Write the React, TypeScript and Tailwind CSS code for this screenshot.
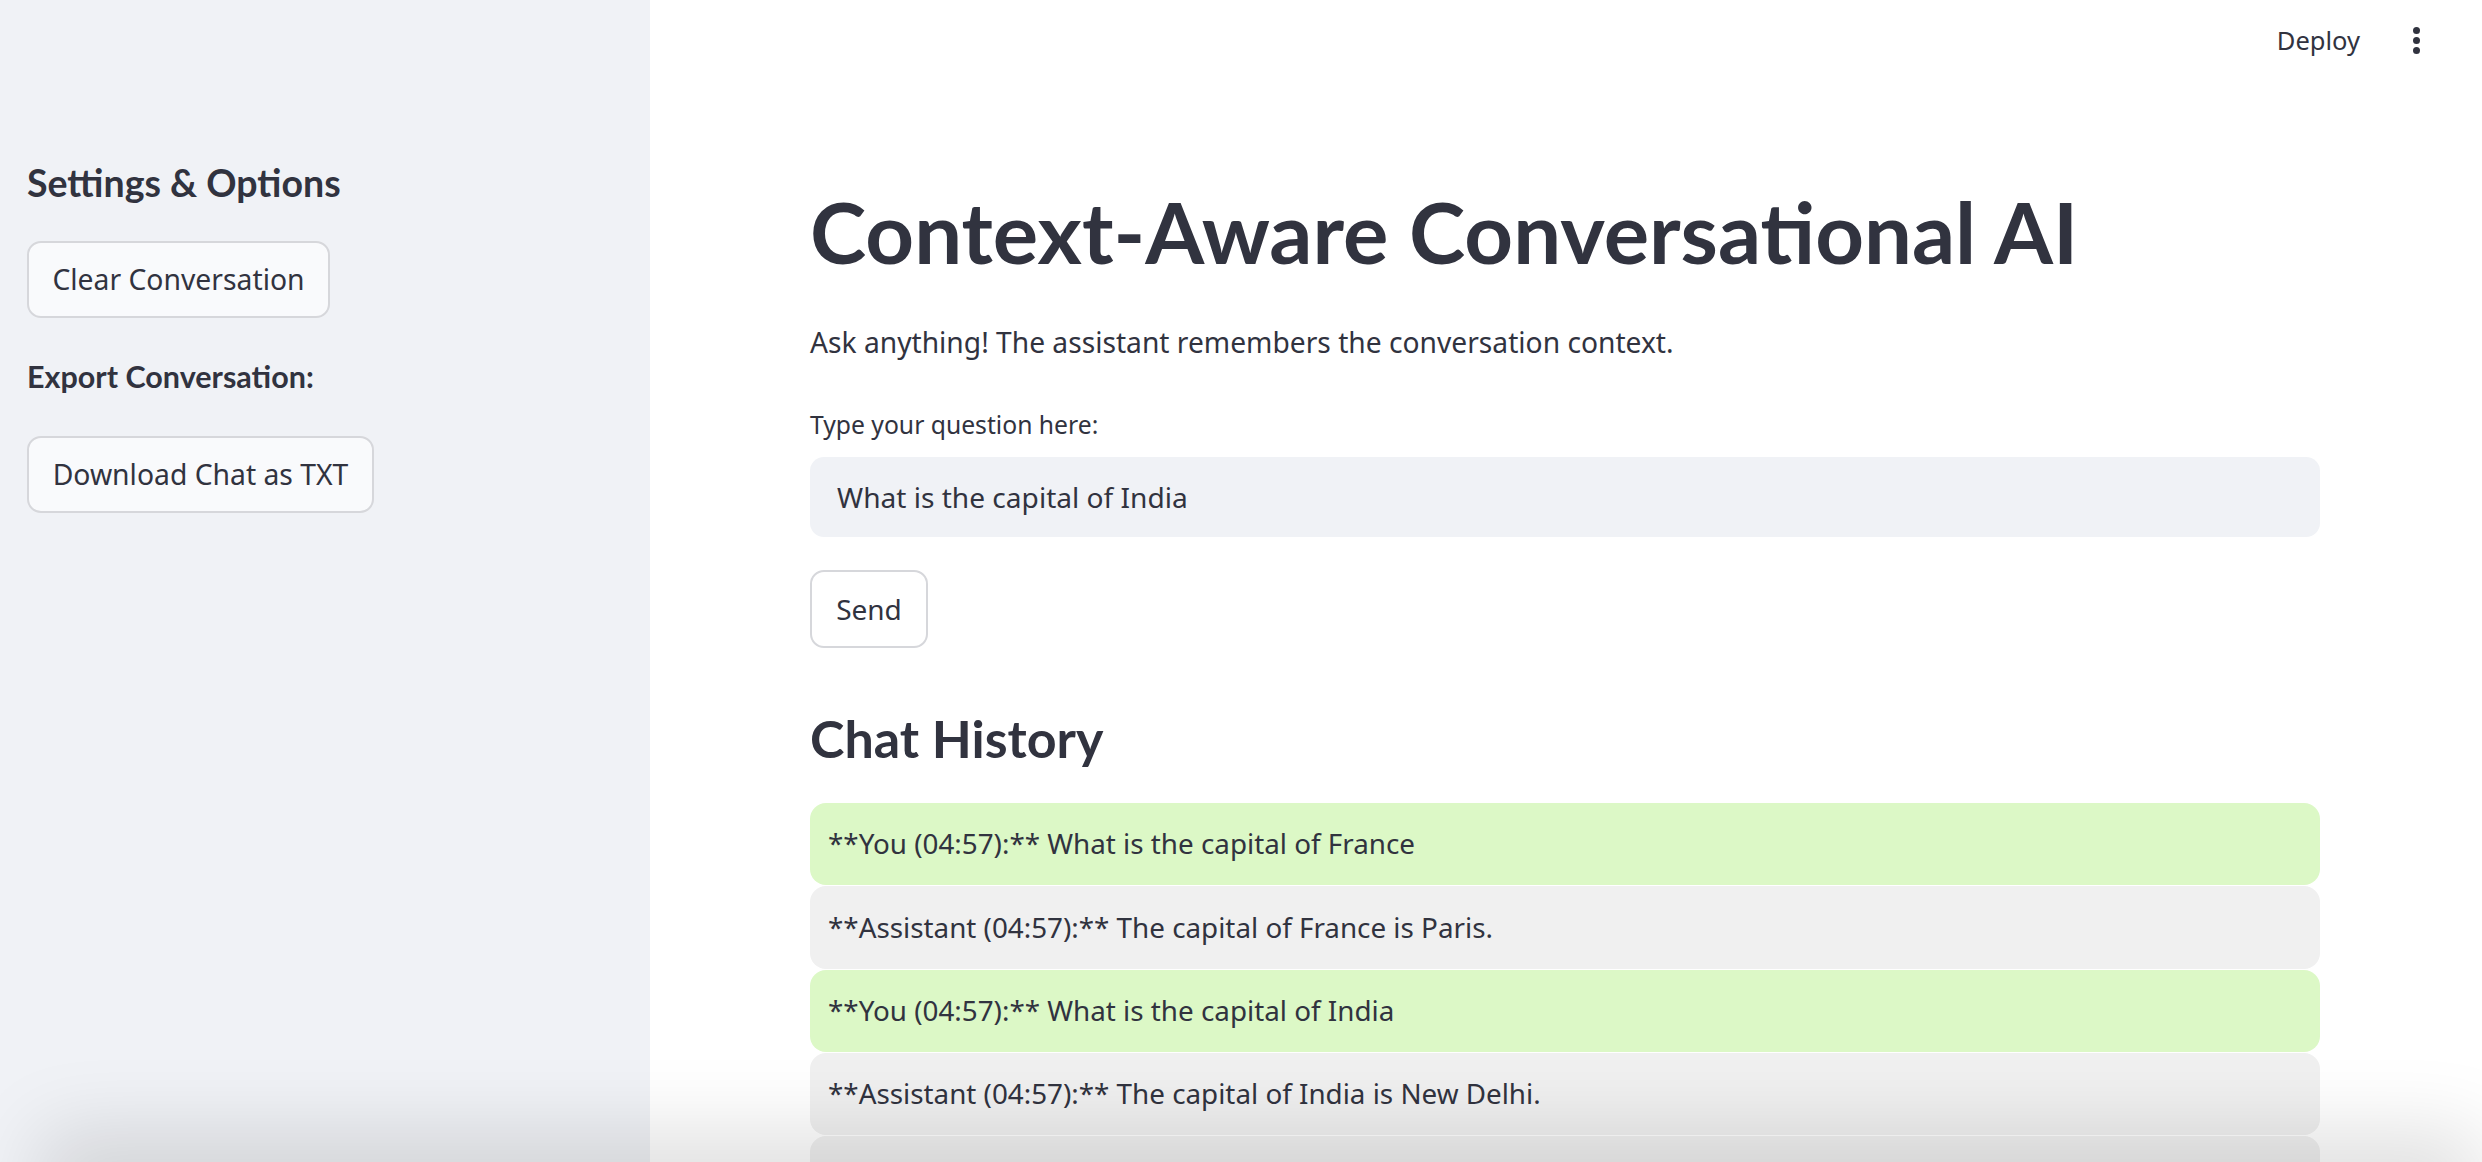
export default function App() {
  const rows = [
    { you: true, text: "**You (04:57):** What is the capital of France" },
    { you: false, text: "**Assistant (04:57):** The capital of France is Paris." },
    { you: true, text: "**You (04:57):** What is the capital of India" },
    { you: false, text: "**Assistant (04:57):** The capital of India is New Delhi." },
    { you: false, text: "" },
  ];
  return (
    <div className="relative flex h-[1162px] w-full overflow-hidden bg-white font-['Noto_Sans',sans-serif] text-[#31333f]">
      <aside className="w-[650px] shrink-0 bg-[#f0f2f6] pl-[27px] pt-[163px]">
        <h2 className="font-[Lato,sans-serif] text-[37.5px] font-bold leading-[40px]">Settings &amp; Options</h2>
        <button className="mt-[38px] flex h-[77px] w-[303px] items-center justify-center rounded-[14px] border-2 border-[#d6d7db] bg-[#f9fafc] text-[28.3px]">
          Clear Conversation
        </button>
        <div className="mt-[40px] font-[Lato,sans-serif] text-[30.5px] font-bold leading-[36px]">Export Conversation:</div>
        <button className="mt-[42px] flex h-[77px] w-[347px] items-center justify-center rounded-[14px] border-2 border-[#d6d7db] bg-[#f9fafc] text-[28.3px]">
          Download Chat as TXT
        </button>
      </aside>
      <main className="relative flex-1">
        <header className="absolute right-0 top-0 flex h-[80px] items-center gap-[53px] pr-[62px]">
          <span className="text-[25.5px]">Deploy</span>
          <div className="flex flex-col gap-[3px]">
            <span className="h-[7px] w-[7px] rounded-full bg-[#31333f]" />
            <span className="h-[7px] w-[7px] rounded-full bg-[#31333f]" />
            <span className="h-[7px] w-[7px] rounded-full bg-[#31333f]" />
          </div>
        </header>
        <div className="ml-[160px] flex w-[1510px] flex-col pt-[183px]">
          <h1 className="font-[Lato,sans-serif] text-[85px] font-bold leading-[96px]">Context-Aware Conversational AI</h1>
          <p className="mt-[45px] text-[28.2px] leading-[36px]">Ask anything! The assistant remembers the conversation context.</p>
          <label className="mt-[51px] text-[24.7px] leading-[28px]">Type your question here:</label>
          <div className="mt-[18px] flex h-[80px] items-center rounded-[14px] bg-[#f0f2f6] px-[27px] text-[28.1px]">
            What is the capital of India
          </div>
          <button className="mt-[33px] flex h-[78px] w-[118px] items-center justify-center rounded-[14px] border-2 border-[#d6d7db] bg-white text-[28px]">
            Send
          </button>
          <h3 className="mt-[58px] font-[Lato,sans-serif] text-[52px] font-bold leading-[64px]">Chat History</h3>
          <div className="mt-[33px] flex flex-col gap-[1px]">
            {rows.map((r, i) => (
              <div
                key={i}
                className={
                  "flex h-[82.3px] items-center rounded-[16px] pl-[18px] text-[27.8px] " +
                  (r.you ? "bg-[#dcf8c6]" : "bg-[#f0f0f0]")
                }
              >
                {r.text}
              </div>
            ))}
          </div>
        </div>
      </main>
      <div className="pointer-events-none absolute left-[80px] right-[40px] top-[1172px] h-[20px] shadow-[0_0_80px_40px_rgba(0,0,0,0.13)]" />
    </div>
  );
}
